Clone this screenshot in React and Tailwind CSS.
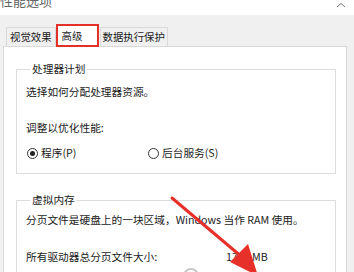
import React from "react";

const font = { fontFamily: '"Noto Sans CJK SC", "Noto Sans", sans-serif' };

const Radio = ({ checked, label }) => (
  <div className="flex items-center gap-[3px]">
    <span className="w-[11px] h-[11px] rounded-full border border-[#333] flex items-center justify-center bg-white">
      {checked && <span className="w-[5px] h-[5px] rounded-full bg-[#222]" />}
    </span>
    <span>{label}</span>
  </div>
);

const Group = ({ title, children, className }) => (
  <fieldset className={"border border-[#dcdcdc] pl-[9px] pr-2 " + className}>
    <legend className="ml-[4px] px-[2px] leading-[14px]">{title}</legend>
    {children}
  </fieldset>
);

export default function App() {
  return (
    <div
      className="relative w-[354px] h-[272px] overflow-hidden bg-[#f0f0f0] text-[10.7px] text-[#1a1a1a] flex flex-col"
      style={font}
    >
      {/* title strip */}
      <div className="h-[15px] shrink-0 bg-white flex justify-between overflow-hidden">
        <span className="text-[13px] leading-[14px] -mt-[6px] text-[#666]">性能选项</span>
        <svg width="12" height="8" viewBox="0 0 12 8" className="mt-[1px] mr-[7px]">
          <path d="M2 6 L6 2.5 L10 6" fill="none" stroke="#777" strokeWidth="1" />
        </svg>
      </div>

      {/* tabs */}
      <div className="shrink-0 flex items-end pl-[6px] mt-[9px] h-[22px] relative z-10 leading-[14px] text-[10.4px]">
        <div className="h-[19px] px-[3px] border border-b-0 border-[#d9d9d9] bg-[#f0f0f0] flex items-center">
          视觉效果
        </div>
        <div className="h-[23px] w-[43px] border-2 border-[#e5302a] bg-white pl-[4px] flex items-center -mb-[1px]">
          高级
        </div>
        <div className="h-[19px] ml-[1px] px-[2px] border border-b-0 border-[#d9d9d9] bg-[#f0f0f0] flex items-center">
          数据执行保护
        </div>
      </div>

      {/* panel */}
      <div className="shrink-0 ml-[3px] mr-[7px] h-[300px] bg-white border border-[#d9d9d9] pl-[12px] pr-[10px] pt-[15px] leading-[14px]">
        <Group title="处理器计划" className="pb-[13px]">
          <div className="mt-[9px]">选择如何分配处理器资源。</div>
          <div className="mt-[22px]">调整以优化性能:</div>
          <div className="mt-[11px] flex pl-[1px]">
            <div className="w-[121px]">
              <Radio checked label="程序(P)" />
            </div>
            <Radio label="后台服务(S)" />
          </div>
        </Group>

        <Group title="虚拟内存" className="mt-[19px] pb-4">
          <div className="mt-[6px]">分页文件是硬盘上的一块区域，Windows 当作 RAM 使用。</div>
          <div className="mt-[23px] flex">
            <span className="w-[200px]">所有驱动器总分页文件大小:</span>
            <span>1792 MB</span>
          </div>
          <div className="mt-[4px] pl-[157px]">
            <span className="block w-[16px] h-[16px] rounded-full border-2 border-[#c8c8c8]" />
          </div>
        </Group>
      </div>

      {/* red annotation arrow */}
      <svg className="absolute left-0 top-0 pointer-events-none" width="354" height="272" viewBox="0 0 354 272">
        <line x1="172" y1="198" x2="242" y2="257" stroke="#e8302b" strokeWidth="3" strokeLinecap="round" />
        <polygon points="258,276 230,262 248,244" fill="#e8302b" />
      </svg>
    </div>
  );
}
